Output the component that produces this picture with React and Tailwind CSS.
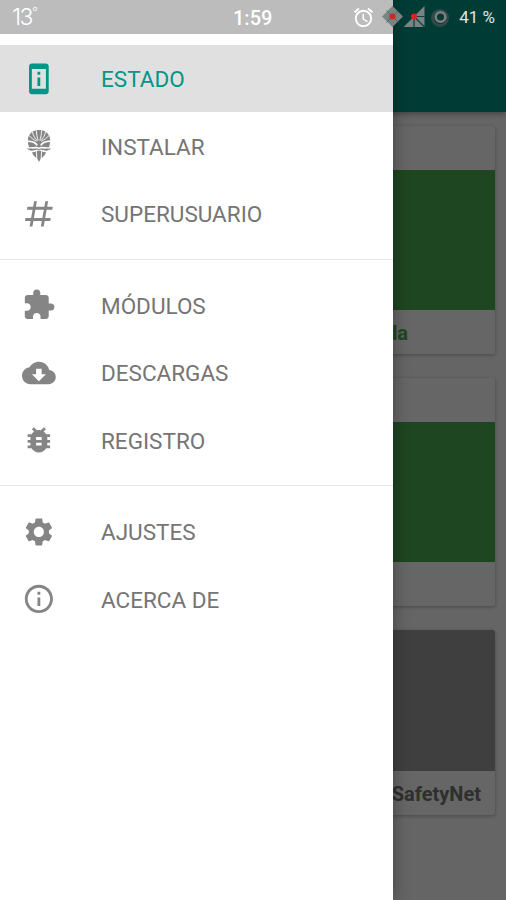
import {
  MdAlarm,
  MdBugReport,
  MdCloudDownload,
  MdExtension,
  MdInfoOutline,
  MdPermDeviceInformation,
  MdSettings,
} from 'react-icons/md'

function MaskIcon({ className }) {
  return (
    <svg viewBox="0 0 24 32" className={className} fill="currentColor">
      {/* head */}
      <path d="M12 0C7 0 3 2.500 1.300 7C0.500 10 0.800 14 2.200 18L6 21H18L21.800 18C23.200 14 23.500 10 22.700 7C21 2.500 17 0 12 0z" />
      {/* forehead stripes */}
      <g fill="none" stroke="#fff" strokeWidth="0.9">
        <path d="M9.500 0.500C9.400 4 10.200 7.500 11.200 10.500M14.500 0.500C14.600 4 13.800 7.500 12.800 10.500" />
        <path d="M5.400 1.800C6 5 7.600 8 10.200 10.500M18.600 1.800C18 5 16.400 8 13.800 10.500" />
        <path d="M2.200 5.500C4 8 6.500 9.800 9.800 11.200M21.800 5.500C20 8 17.500 9.800 14.200 11.200" />
      </g>
      {/* eyes */}
      <path d="M1 10.600C4.500 10.800 8.500 11.200 10.600 14.500L10.200 16.200C8 13.400 5 12.200 1 12zM23 10.600C19.500 10.800 15.500 11.200 13.400 14.500L13.800 16.200C16 13.400 19 12.200 23 12z" fill="#fff" />
      {/* moustache */}
      <path d="M0 16.800C4.500 18.500 7.500 15.600 12 17.400C16.500 15.600 19.500 18.500 24 16.800V18.200C20 19.800 16.500 17.400 12 19C7.500 17.400 4 19.800 0 18.200z" fill="#fff" />
      <path d="M5 20.200C8 20.600 9.500 19.200 12 19.900C14.500 19.200 16 20.600 19 20.200V22H5z" fill="#fff" />
      <path d="M0 18C1.500 18.800 3 18.800 4.500 18.500L7 20.300C4.500 21.300 1.500 20.700 0 18zM24 18C22.500 18.800 21 18.800 19.500 18.500L17 20.300C19.500 21.300 22.500 20.700 24 18z" />
      {/* beard */}
      <path d="M5 22.200C6.400 22.400 7.800 22 9 21.200L9.300 28C7.300 26.500 5.700 24.500 5 22.200zM19 22.200C17.600 22.400 16.200 22 15 21.200L14.700 28C16.700 26.500 18.300 24.500 19 22.200z" />
      <path d="M9.900 20.900L12 20.600L14.100 20.900L13.700 28.500L12 32L10.300 28.500z" />
    </svg>
  )
}

function HashIcon({ className }) {
  return (
    <svg viewBox="0 0 24 24" className={className} fill="currentColor">
      <path d="M5.410 21L6.120 17H2.120L2.470 15H6.470L7.530 9H3.530L3.880 7H7.880L8.590 3H10.590L9.880 7H15.880L16.590 3H18.590L17.880 7H21.880L21.530 9H17.530L16.470 15H20.470L20.120 17H16.120L15.410 21H13.410L14.120 17H8.120L7.410 21H5.410M9.530 9L8.470 15H14.470L15.530 9H9.530Z" />
    </svg>
  )
}

const sections = [
  [
    { label: 'ESTADO', icon: MdPermDeviceInformation, active: true },
    { label: 'INSTALAR', icon: MaskIcon, iconClass: 'w-6 h-8' },
    { label: 'SUPERUSUARIO', icon: HashIcon },
  ],
  [
    { label: 'MÓDULOS', icon: MdExtension },
    { label: 'DESCARGAS', icon: MdCloudDownload },
    { label: 'REGISTRO', icon: MdBugReport },
  ],
  [
    { label: 'AJUSTES', icon: MdSettings },
    { label: 'ACERCA DE', icon: MdInfoOutline },
  ],
]

function NavItem({ label, icon: Icon, iconClass = 'w-[33.75px] h-[33.75px]', active }) {
  return (
    <li
      className={`flex h-[67.5px] items-center ${
        active ? 'bg-[#e0e0e0] text-[#009688]' : 'text-[#757575]'
      }`}
    >
      <span className={`flex w-[78.5px] justify-center ${active ? '' : 'text-[#858585]'}`}>
        <Icon className={iconClass} />
      </span>
      <span className="ml-[22.5px] pt-[1.5px] text-[22.5px] leading-none">{label}</span>
    </li>
  )
}

function Drawer() {
  return (
    <nav className="absolute inset-y-0 left-0 w-[393px] bg-white pt-[44.900px] shadow-[0_0_16px_rgba(0,0,0,0.35)]">
      {sections.map((items, i) => (
        <ul
          key={i}
          className={i > 0 ? 'mt-[11.5px] border-t border-[#e6e6e6] pt-[11.5px]' : ''}
        >
          {items.map((item) => (
            <NavItem key={item.label} {...item} />
          ))}
        </ul>
      ))}
    </nav>
  )
}

function StatusBar() {
  return (
    <div className="absolute inset-x-0 top-0 flex h-[34px] text-white">
      <div className="relative flex w-[393px] items-center bg-[#bbbcbb]">
        <span className="ml-3 flex items-start pt-px font-['Inter'] text-[23px] font-light leading-none tracking-[-1.5px]">
          13<span className="text-[13px] leading-none">°</span>
        </span>
        <span className="absolute left-[233px] top-[8px] text-[20px] font-medium leading-none">
          1:59
        </span>
        <MdAlarm className="ml-auto mr-[18px] h-[23px] w-[23px]" />
      </div>
      <span className="ml-auto mr-[11px] self-center pt-px text-[17px] leading-none text-[#dfe5e4]">
        41 %
      </span>
      <svg viewBox="0 0 72 24" className="absolute left-[382px] top-[5px] h-6 w-[72px]">
        {/* wifi */}
        <path d="M10.500 1L21 11.500L10.500 22L0 11.500z" fill="#788384" />
        <path d="M4.500 5.500L16.500 17.500M16.500 5.500L4.500 17.500" stroke="#566466" strokeWidth="1" />
        <circle cx="10.500" cy="11.500" r="3" fill="#dd2020" />
        {/* signal */}
        <path d="M42.500 1V22H21.500z" fill="#788384" />
        <path d="M32 11.500H42.500M32 11.500V22M32 11.500L42.500 22" stroke="#123f3b" strokeWidth="1.200" />
        <circle cx="32" cy="11.500" r="3" fill="#dd2020" />
        {/* battery ring */}
        <circle cx="58" cy="13" r="7.500" fill="none" stroke="#34494a" strokeWidth="3" />
        <circle cx="58.500" cy="12" r="4.800" fill="none" stroke="#7c8080" strokeWidth="2.500" />
      </svg>
    </div>
  )
}

function StatusCard({ header = true, color, caption, captionClass = '' }) {
  return (
    <section className="overflow-hidden rounded-[3px] bg-white shadow-[0_1px_4px_rgba(0,0,0,0.3)]">
      {header && <div className="h-11" />}
      <div className={`h-[140.5px] ${color}`} />
      <div className={`flex h-11 items-center justify-end pt-[2px] text-[20px] font-bold ${captionClass}`}>
        {caption}
      </div>
    </section>
  )
}

export default function App() {
  return (
    <div className="relative h-[900px] w-[506px] overflow-hidden bg-[#fdfdfd] font-['Roboto',sans-serif]">
      <header className="h-28 bg-[#009688] shadow-[0_2px_6px_rgba(0,0,0,0.35)]" />
      <main className="flex flex-col gap-[23.75px] px-[11px] pt-[13.5px]">
        <StatusCard color="bg-[#4caf50]" caption="Magisk instalada" captionClass="pr-[87px] text-[#4caf50]" />
        <StatusCard color="bg-[#4caf50]" />
        <StatusCard
          header={false}
          color="bg-[#9e9e9e]"
          caption="Toca para comprobar SafetyNet"
          captionClass="pr-[14px] text-[#757575]"
        />
      </main>
      <div className="absolute inset-0 bg-black/60" />
      <Drawer />
      <StatusBar />
    </div>
  )
}
